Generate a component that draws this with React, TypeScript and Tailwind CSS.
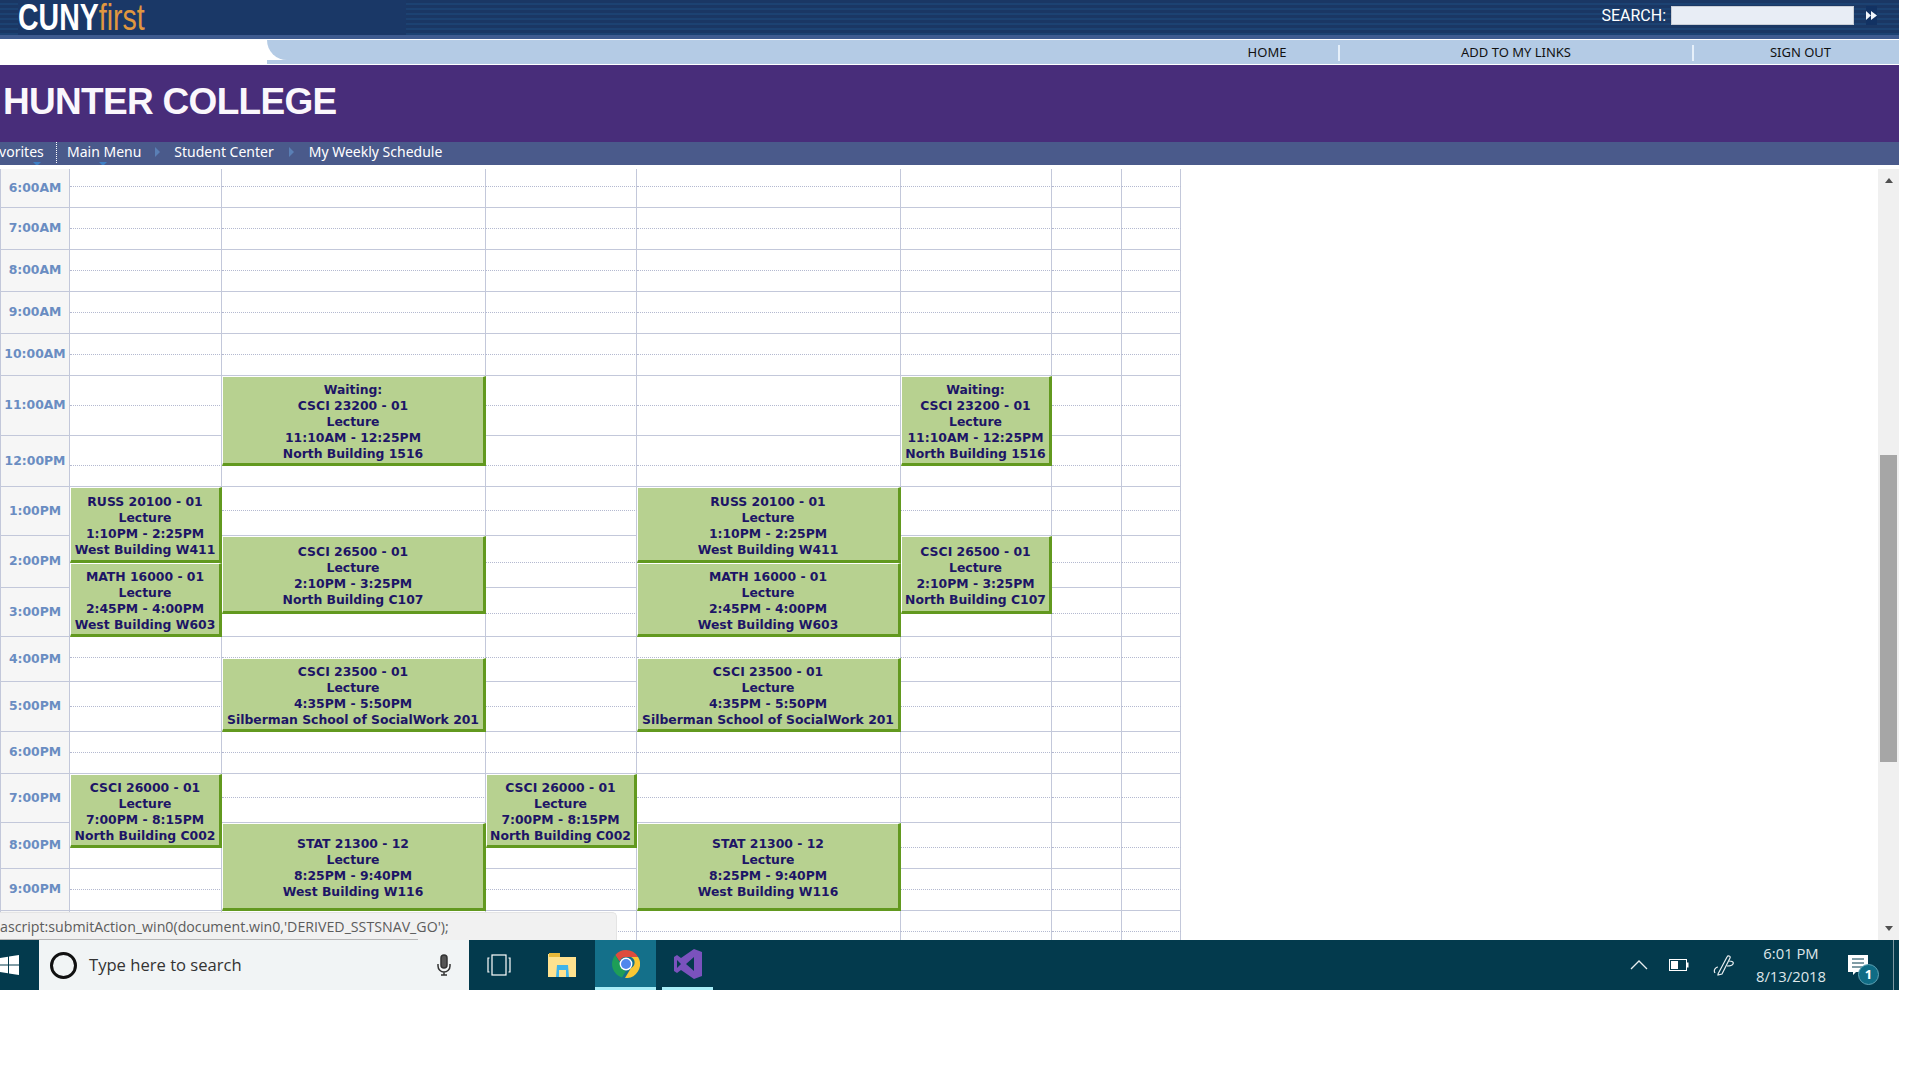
import React from 'react';

interface ClassEvent {
  col: number;
  row: number;
  span: number;
  lines: string[];
}

const hours = ['6:00AM', '7:00AM', '8:00AM', '9:00AM', '10:00AM', '11:00AM', '12:00PM', '1:00PM', '2:00PM', '3:00PM', '4:00PM', '5:00PM', '6:00PM', '7:00PM', '8:00PM', '9:00PM', '10:00PM'];

const russ = ['RUSS 20100 - 01', 'Lecture', '1:10PM - 2:25PM', 'West Building W411'];
const math = ['MATH 16000 - 01', 'Lecture', '2:45PM - 4:00PM', 'West Building W603'];
const waiting = ['Waiting:', 'CSCI 23200 - 01', 'Lecture', '11:10AM - 12:25PM', 'North Building 1516'];
const csci265 = ['CSCI 26500 - 01', 'Lecture', '2:10PM - 3:25PM', 'North Building C107'];
const csci235 = ['CSCI 23500 - 01', 'Lecture', '4:35PM - 5:50PM', 'Silberman School of SocialWork 201'];
const csci260 = ['CSCI 26000 - 01', 'Lecture', '7:00PM - 8:15PM', 'North Building C002'];
const stat = ['STAT 21300 - 12', 'Lecture', '8:25PM - 9:40PM', 'West Building W116'];

const events: ClassEvent[] = [
  { col: 2, row: 15, span: 3, lines: russ },
  { col: 2, row: 18, span: 3, lines: math },
  { col: 2, row: 27, span: 3, lines: csci260 },
  { col: 3, row: 11, span: 3, lines: waiting },
  { col: 3, row: 17, span: 3, lines: csci265 },
  { col: 3, row: 22, span: 3, lines: csci235 },
  { col: 3, row: 29, span: 4, lines: stat },
  { col: 4, row: 27, span: 3, lines: csci260 },
  { col: 5, row: 15, span: 3, lines: russ },
  { col: 5, row: 18, span: 3, lines: math },
  { col: 5, row: 22, span: 3, lines: csci235 },
  { col: 5, row: 29, span: 4, lines: stat },
  { col: 6, row: 11, span: 3, lines: waiting },
  { col: 6, row: 17, span: 3, lines: csci265 },
];

const isTaken = (col: number, row: number) =>
  events.some((e) => e.col === col && row >= e.row && row < e.row + e.span);

function ScheduleGrid() {
  const cells: React.ReactNode[] = [];
  hours.forEach((label, i) => {
    const first = i * 2 + 1;
    cells.push(
      <div
        key={label}
        style={{ gridColumn: 1, gridRow: `${first} / span 2` }}
        className="flex items-center justify-center border-l border-r border-b border-[#c3c8da] bg-[#f6f6f6] text-[12.4px] font-bold whitespace-nowrap text-[#6a8dc2]"
      >
        {label}
      </div>
    );
    for (let col = 2; col <= 8; col++) {
      for (const row of [first, first + 1]) {
        if (isTaken(col, row)) continue;
        cells.push(
          <div
            key={`${col}-${row}`}
            style={{ gridColumn: col, gridRow: row }}
            className={
              row === first
                ? 'border-r border-b border-r-[#c3c8da] border-b-[#b4b9d0] [border-bottom-style:dotted]'
                : 'border-r border-b border-[#c3c8da]'
            }
          />
        );
      }
    }
  });

  return (
    <div
      className="grid grid-cols-[70px_152px_264px_151px_264px_151px_70px_59px] grid-rows-[18px_21px_21px_21px_21px_21px_21px_21px_21px_21px_30px_30px_30px_21px_24px_25px_27px_25px_26px_23px_21px_24px_25px_25px_21px_21px_24px_25px_25px_21px_21px_21px_21px_21px] w-[1181px] font-['DejaVu_Sans',Verdana,sans-serif]"
    >
      {cells}
      {events.map((e) => (
        <div
          key={`${e.col}-${e.row}`}
          style={{ gridColumn: e.col, gridRow: `${e.row} / span ${e.span}` }}
          className="flex flex-col items-center justify-center border-t border-l border-t-white border-l-white border-r-[3px] border-b-[3px] border-r-[#62991f] border-b-[#62991f] bg-[#b7d190] pt-[4px] text-center text-[12.4px] leading-[16px] font-bold whitespace-nowrap text-[#1d1566]"
        >
          {e.lines.map((line) => (
            <span key={line}>{line}</span>
          ))}
        </div>
      ))}
    </div>
  );
}

function Header() {
  return (
    <>
      <div className="relative flex h-[39px] items-start justify-between bg-[#3f5b8f]">
        <div className="flex h-[35px] flex-1 justify-between bg-[repeating-linear-gradient(180deg,#1a3764_0px,#1a3764_3px,#1c4272_3px,#1c4272_5px)]">
          <div className="ml-[18px] flex h-[35px] w-[388px] items-center bg-[#1a3867] font-['Liberation_Sans',sans-serif] text-[37px] leading-none font-bold">
            <span className="origin-left scale-x-[0.77] whitespace-nowrap text-white">
              CUNY<span className="font-normal text-[#e0973f]">first</span>
            </span>
          </div>
          <div className="flex items-start pt-[6px] pr-[22px] font-['Roboto',sans-serif]">
            <span className="mr-[5px] text-[16px] leading-[20px] text-white">SEARCH:</span>
            <div className="h-[19px] w-[183px] border border-[#c9ced6] bg-[#e8edf5]" />
            <div className="ml-[12px] flex h-[19px] w-[11px] items-center justify-center bg-[#123263]">
              <svg width="11" height="11" viewBox="0 0 11 11" fill="#f2f6fb">
                <path d="M0 1l5 4.500L0 10z" />
                <path d="M5 1l6 4.500L5 10z" />
              </svg>
            </div>
          </div>
        </div>
      </div>

      <div className="flex h-[26px] border-y border-white bg-white font-['Noto_Sans',sans-serif] text-[13px] text-[#111]">
        <div className="ml-[267px] flex w-[24px] flex-col bg-white">
          <div className="h-[20px] rounded-bl-[20px] bg-[#b4cbe5]" />
          <div className="mt-auto h-[4px] bg-[#b4cbe5]" />
        </div>
        <div className="flex flex-1 items-center bg-[#b4cbe5] pt-[1px]">
          <div className="w-[905px]" />
          <div className="flex w-[142px] justify-center">HOME</div>
          <div className="h-[16px] w-[2px] bg-[#e6f0fa]" />
          <div className="flex w-[352px] justify-center">ADD TO MY LINKS</div>
          <div className="h-[16px] w-[2px] bg-[#e6f0fa]" />
          <div className="flex flex-1 justify-center pl-[8px]">SIGN OUT</div>
        </div>
      </div>

      <div className="flex h-[77px] items-start bg-[#482d7a] pt-[15px] pl-[3px] font-['Liberation_Sans',sans-serif] text-[37px] leading-[44px] font-bold tracking-[-0.7px] text-[#faf7fc]">
        HUNTER COLLEGE
      </div>

      <div className="flex h-[23px] items-center overflow-hidden bg-[#4a5a8b] pb-[4px] font-['Noto_Sans',sans-serif] text-[14px] text-white">
        <span className="relative ml-[-16px] w-[61px] shrink-0">
          Favorites
          <i className="absolute right-[4px] bottom-[-4px] border-x-[4px] border-t-[4px] border-x-transparent border-t-[#3f7fc4]" />
        </span>
        <div className="ml-[11px] h-[22px] border-l border-dotted border-white" />
        <span className="relative ml-[10px]">
          Main Menu
          <i className="absolute bottom-[-4px] left-[32px] border-x-[4px] border-t-[4px] border-x-transparent border-t-[#3f7fc4]" />
        </span>
        <i className="mx-[14px] border-y-[5px] border-l-[5px] border-y-transparent border-l-[#5a7fb5]" />
        <span>Student Center</span>
        <i className="mx-[15px] border-y-[5px] border-l-[5px] border-y-transparent border-l-[#5a7fb5]" />
        <span>My Weekly Schedule</span>
      </div>
    </>
  );
}

function Scrollbar() {
  return (
    <div className="flex w-[21px] flex-col items-center bg-[#f0f0f0] pt-[9px]">
      <i className="border-x-[4px] border-b-[5px] border-x-transparent border-b-[#505050]" />
      <div className="mt-[272px] h-[307px] w-[17px] bg-[#a6a6a6]" />
      <i className="mt-auto mb-[9px] border-x-[4px] border-t-[5px] border-x-transparent border-t-[#505050]" />
    </div>
  );
}

function Taskbar() {
  return (
    <div className="flex h-[50px] items-stretch bg-[#033a4d] font-['Open_Sans',sans-serif]">
      <div className="flex w-[39px] items-center">
        <svg width="20" height="20" viewBox="0 0 20 20" fill="#fff">
          <path d="M0 3l8-1.200V9.400H0zM9 1.600L19 0v9.400H9zM0 10.600h8v7.600L0 17zM9 10.600h10V20L9 18.400z" />
        </svg>
      </div>
      <div className="flex w-[430px] items-center bg-[#f1f4f5]">
        <div className="ml-[11px] h-[27px] w-[27px] rounded-full border-[3px] border-[#111]" />
        <span className="ml-[12px] text-[16.6px] text-[#333]">Type here to search</span>
        <svg className="mr-[17px] ml-auto" width="16" height="22" viewBox="0 0 16 22" fill="none" stroke="#333" strokeWidth="1.500">
          <rect x="5" y="1" width="6" height="13" rx="3" fill="#555" />
          <path d="M2 10v2a6 6 0 0 0 12 0v-2M8 18v3M5 21h6" />
        </svg>
      </div>
      <div className="flex w-[126px] items-center">
        <svg className="ml-[18px]" width="24" height="22" viewBox="0 0 24 22" fill="none" stroke="#fff" strokeWidth="1.200">
          <rect x="5" y="1" width="14" height="20" />
          <path d="M2.500 4H1v14h1.500M21.500 4H23v14h-1.500" />
        </svg>
        <svg className="ml-[37px]" width="28" height="24" viewBox="0 0 28 24">
          <path d="M0 1h10l2 3h16v20H0z" fill="#ffe28f" />
          <path d="M1 0h11v4H1z" fill="#e8b93a" />
          <path d="M9 12h11l1 12h-3v-7h-7v7H8z" fill="#3fb4ea" />
        </svg>
      </div>
      <div className="flex w-[61px] flex-col items-center justify-center border-b-[3px] border-b-[#a8eef8] bg-[#14708a]">
        <svg width="28" height="28" viewBox="0 0 28 28">
          <path d="M14 0a14 14 0 0 1 12.100 7H14a7 7 0 0 0-6.500 4.300L3.300 5A14 14 0 0 1 14 0z" fill="#dd4c3e" />
          <path d="M3.300 5l5.400 9.500A6 6 0 0 0 14 21l-4 6.400A14 14 0 0 1 3.300 5z" fill="#1e9e58" />
          <path d="M26.100 7A14 14 0 0 1 13 28l6-10a6 6 0 0 0 0-11z" fill="#f8c733" />
          <circle cx="14" cy="14" r="6.400" fill="#fff" />
          <circle cx="14" cy="14" r="5" fill="#4f87ed" />
        </svg>
      </div>
      <div className="ml-[6px] flex w-[51px] flex-col items-center justify-center border-b-[3px] border-b-[#a8eef8]">
        <svg width="28" height="30" viewBox="0 0 28 30" fill="#7a52bd">
          <path d="M20 0l8 3v24l-8 3L7 21l-4 3-3-2V8l3-2 4 3zM20 8l-8 7 8 7zM3 11v8l4-4z" fillRule="evenodd" />
        </svg>
      </div>
      <div className="flex-1" />
      <div className="relative flex w-[275px] items-center text-white">
        <svg className="absolute left-[6px]" width="18" height="10" viewBox="0 0 18 10" fill="none" stroke="#e8eef0" strokeWidth="1.300">
          <path d="M1 9l8-8 8 8" />
        </svg>
        <svg className="absolute left-[45px]" width="20" height="12" viewBox="0 0 20 12">
          <rect x="0.500" y="0.500" width="17" height="11" fill="none" stroke="#fff" />
          <rect x="2" y="2" width="7" height="8" fill="#fff" />
          <rect x="18" y="3.500" width="1.500" height="5" fill="#fff" />
        </svg>
        <svg className="absolute left-[89px]" width="22" height="22" viewBox="0 0 22 22" fill="none" stroke="#e8eef0" strokeWidth="1.200">
          <path d="M2 19c-2-3 1-6 3-6M5 20L14 3c1-2 4-1 3 1L9 20l-4 1zM16 7c3 0 5 1 4 3s-4 2-6 2" />
        </svg>
        <div className="absolute left-[129px] flex w-[76px] flex-col items-center text-[14.8px] leading-[23px] text-[#dfe7ea]">
          <span>6:01 PM</span>
          <span>8/13/2018</span>
        </div>
        <svg className="absolute top-[15px] left-[224px]" width="20" height="20" viewBox="0 0 20 20" fill="#fff">
          <path d="M0 0h20v17H8l-3 3v-3H0z" />
          <path d="M4 4h12M4 8h12M4 12h12" stroke="#033a4d" strokeWidth="1" />
        </svg>
        <div className="absolute top-[24px] left-[234px] flex h-[21px] w-[21px] items-center justify-center rounded-full border border-[#5fa2b4] bg-[#0f6c85] text-[13px] font-bold text-white">
          1
        </div>
        <div className="absolute top-0 right-[5px] h-full w-px bg-[#7d98a3]" />
      </div>
    </div>
  );
}

export default function App() {
  return (
    <div className="h-[1080px] w-[1920px] overflow-hidden bg-white">
      <div className="w-[1899px]">
        <Header />
        <div className="relative mt-[4px] flex h-[771px] overflow-hidden">
          <div className="flex-1 overflow-hidden">
            <ScheduleGrid />
          </div>
          <Scrollbar />
          <div className="absolute bottom-0 left-0 flex h-[28px] w-[617px] items-center overflow-hidden rounded-tr-[5px] border-t border-r border-[#e4e4e4] bg-[#f1f1f1] font-['Open_Sans',sans-serif] text-[14.2px] text-[#5c5c5c]">
            <span className="whitespace-nowrap">ascript:submitAction_win0(document.win0,'DERIVED_SSTSNAV_GO');</span>
            <div className="absolute bottom-0 left-0 h-px w-[418px] bg-[#b5b5b5]" />
          </div>
        </div>
        <Taskbar />
      </div>
    </div>
  );
}
